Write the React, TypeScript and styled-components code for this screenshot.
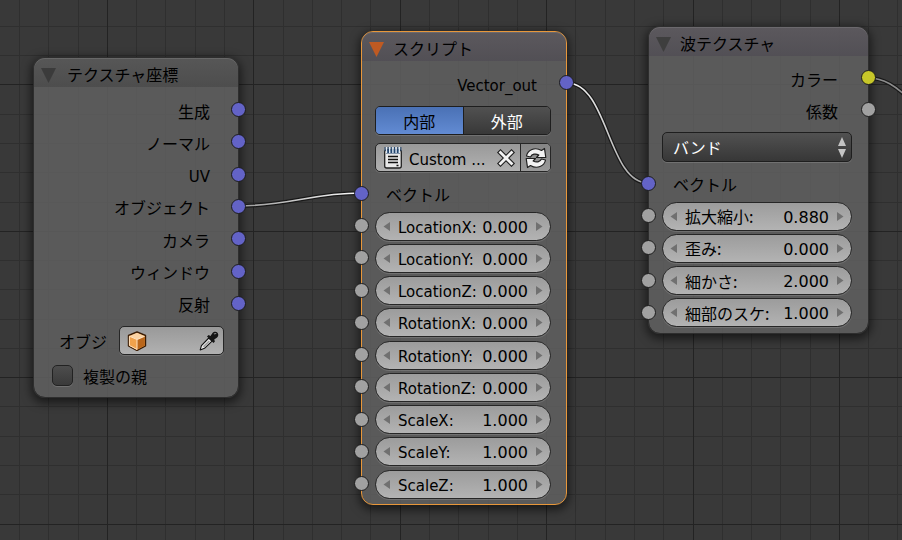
import React from "react";
import styled, { createGlobalStyle, css } from "styled-components";

const GlobalStyle = createGlobalStyle`
  *, *::before, *::after { box-sizing: border-box; }
  html, body, #root { height: 100%; margin: 0; }
  body { background: #393939; overflow: hidden; }
  button, input, select { font: inherit; color: inherit; margin: 0; padding: 0; border: 0; background: none; }
`;

const Canvas = styled.main`
  position: relative;
  width: 100%;
  height: 100%;
  min-height: 100vh;
  overflow: hidden;
  background: #393939;
  color: #000;
  font-family: "DejaVu Sans", "Noto Sans CJK JP", sans-serif;
  font-size: 15px;
  line-height: 20px;
`;

const Layer = styled.svg`
  position: absolute;
  inset: 0;
  width: 100%;
  height: 100%;
  pointer-events: none;
`;

const jp = css`
  font-family: "Noto Sans CJK JP", sans-serif;
  font-size: 16px;
`;

const NodeBox = styled.section<{ $x: number; $y: number; $w: number; $active?: boolean }>`
  position: absolute;
  left: ${(p) => p.$x}px;
  top: ${(p) => p.$y}px;
  width: ${(p) => p.$w}px;
  border: 1px solid ${(p) => (p.$active ? "#e8973a" : "#2e2e2e")};
  border-radius: 12px;
  background: rgba(96, 96, 96, 0.86);
  background-clip: padding-box;
  box-shadow: 0 3px 10px 2px rgba(0, 0, 0, 0.55);
`;

const Header = styled.header<{ $tint: string; $gap: number }>`
  ${jp}
  display: flex;
  align-items: center;
  gap: ${(p) => p.$gap}px;
  height: 29px;
  padding: 5px 8px 0 7px;
  border-radius: 11px 11px 0 0;
  background: ${(p) => p.$tint};
  box-shadow: inset 0 1px 0 rgba(255, 255, 255, 0.1);
`;

const Title = styled.h2`
  margin: 0;
  padding-bottom: 3px;
  font: inherit;
`;

const Fold = styled.button`
  display: flex;
  width: 15px;
  height: 15px;
`;

const Body = styled.div<{ $top: number; $bottom: number; $side: number }>`
  display: flex;
  flex-direction: column;
  padding: ${(p) => p.$top}px ${(p) => p.$side}px ${(p) => p.$bottom}px 13px;
`;

const SocketList = styled.div<{ $h: number }>`
  display: flex;
  flex-direction: column;
  justify-content: space-between;
  height: ${(p) => p.$h}px;
`;

const Row = styled.div<{ $out?: boolean }>`
  ${jp}
  position: relative;
  display: flex;
  align-items: center;
  justify-content: ${(p) => (p.$out ? "flex-end" : "flex-start")};
  height: 32px;
  padding: ${(p) => (p.$out ? "1px 14px 0 0" : "0 0 0 11px")};
`;

const LatinText = styled.span`
  margin-top: 4px;
  font-family: "DejaVu Sans", sans-serif;
  font-size: 15px;
`;

const Dot = styled.i<{ $color: string; $side: "left" | "right"; $reach: number }>`
  position: absolute;
  z-index: 1;
  top: 50%;
  ${(p) => p.$side}: -${(p) => p.$reach}px;
  width: 15px;
  height: 15px;
  margin-top: -8px;
  border: 1px solid #1c1c1c;
  border-radius: 50%;
  background: ${(p) => p.$color};
`;

const FieldRow = styled.div`
  position: relative;
  display: flex;
  align-items: center;
  height: 32px;
`;

const NumberField = styled.label`
  display: flex;
  align-items: center;
  flex: 1;
  min-width: 0;
  height: 29px;
  padding: 0 7px;
  border: 1px solid #262626;
  border-radius: 15px;
  background: linear-gradient(#9c9c9c, #b3b3b3);
  box-shadow: 0 1px 0 rgba(255, 255, 255, 0.14);
  white-space: nowrap;
`;

const FieldName = styled.span<{ $jp?: boolean }>`
  margin-left: 8px;
  padding-top: ${(p) => (p.$jp ? 0 : 3)}px;
  ${(p) => p.$jp && jp}
`;

const FieldValue = styled.input`
  flex: 1;
  width: 0;
  min-width: 0;
  margin-right: 8px;
  padding-top: 3px;
  font-size: 16px;
  text-align: right;
  outline: none;
`;

const Segments = styled.div`
  display: flex;
  height: 29px;
  border: 1px solid #1e1e1e;
  border-radius: 5px;
  overflow: hidden;
  box-shadow: 0 1px 0 rgba(255, 255, 255, 0.14);
`;

const Segment = styled.button<{ $on?: boolean }>`
  ${jp}
  flex: 1;
  color: ${(p) => (p.$on ? "#000" : "#fff")};
  background: ${(p) => (p.$on ? "linear-gradient(#4a71b5, #628bd3)" : "linear-gradient(#515151, #383838)")};
  & + & { border-left: 1px solid #1e1e1e; }
`;

const Picker = styled.div`
  display: flex;
  align-items: stretch;
  height: 29px;
  border: 1px solid #262626;
  border-radius: 5px;
  overflow: hidden;
  background: linear-gradient(#999, #b1b1b1);
  box-shadow: 0 1px 0 rgba(255, 255, 255, 0.14);
`;

const IconButton = styled.button<{ $w: number; $divided?: boolean }>`
  display: flex;
  align-items: center;
  justify-content: center;
  width: ${(p) => p.$w}px;
  ${(p) => p.$divided && "border-left: 1px solid #262626; background: linear-gradient(#858585, #999);"}
`;

const PickerText = styled.input`
  flex: 1;
  min-width: 0;
  width: 0;
  padding-top: 4px;
  outline: none;
`;

const SelectBox = styled.div`
  position: relative;
  display: flex;
  height: 30px;
`;

const Select = styled.select`
  ${jp}
  flex: 1;
  appearance: none;
  padding: 0 24px 0 10px;
  border: 1px solid #1e1e1e;
  border-radius: 5px;
  color: #fff;
  background: linear-gradient(#515151, #373737);
  box-shadow: 0 1px 0 rgba(255, 255, 255, 0.14);
`;

const SelectArrows = styled.svg`
  position: absolute;
  right: 5px;
  top: 5px;
  pointer-events: none;
`;

const ObjectRow = styled.div`
  display: flex;
  align-items: center;
  gap: 12px;
  padding-left: 12px;
  margin-top: 6px;
`;

const ObjectLabel = styled.label`
  ${jp}
`;

const ObjectPicker = styled(Picker)`
  flex: 1;
`;

const CheckRow = styled.label`
  ${jp}
  display: flex;
  align-items: center;
  gap: 10px;
  margin-top: 10px;
  padding-left: 5px;
`;

const CheckText = styled.span`
  height: 21px;
  padding-top: 1px;
`;

const Check = styled.input`
  appearance: none;
  width: 21px;
  height: 21px;
  border: 1px solid #222;
  border-radius: 5px;
  background: linear-gradient(#4d4d4d, #3a3a3a);
  box-shadow: 0 1px 0 rgba(255, 255, 255, 0.14);
`;

const Stack = styled.div<{ $mt: number }>`
  margin-top: ${(p) => p.$mt}px;
`;

const BLUE = "#6363c7";
const GREY = "#a1a1a1";
const YELLOW = "#c7c729";

const TINT_INPUT = "linear-gradient(rgba(86, 86, 86, 0.8), rgba(74, 74, 74, 0.8))";
const TINT_TEXTURE = "linear-gradient(rgba(92, 88, 94, 0.8), rgba(80, 77, 84, 0.8))";

const gridLines = (origin: number, span: number) =>
  Array.from({ length: Math.ceil(span / 29) + 10 }, (_, i) => ({
    at: Math.floor(origin + ((i - 5) * 146.4) / 5),
    major: i % 5 === 0,
  })).filter((l) => l.at >= 0);

const Grid = () => (
  <Layer aria-hidden="true" shapeRendering="crispEdges">
    {[false, true].map((major) => (
      <g key={String(major)} fill={major ? "#232323" : "#2f2f2f"}>
        {gridLines(107.4, 2600).filter((l) => l.major === major).map((l) => (
          <rect key={`x${l.at}`} x={l.at} y="0" width="1" height="100%" />
        ))}
        {gridLines(84.9, 1600).filter((l) => l.major === major).map((l) => (
          <rect key={`y${l.at}`} x="0" y={l.at} width="100%" height="1" />
        ))}
      </g>
    ))}
  </Layer>
);

const wires = [
  { d: "M238 206 C288 206 312 193 361 193", tone: "url(#wireA)" },
  { d: "M567 83 C608 83 608 183 648 183", tone: "url(#wireB)" },
  { d: "M868 78 C884 78 896 86 910 100", tone: "#8c8c8c" },
];

const Wires = () => (
  <Layer aria-hidden="true" fill="none">
    <defs>
      <linearGradient id="wireA"><stop offset="0" stopColor="#999" /><stop offset="1" stopColor="#fff" /></linearGradient>
      <linearGradient id="wireB"><stop offset="0" stopColor="#fff" /><stop offset="1" stopColor="#999" /></linearGradient>
    </defs>
    {wires.map((w) => (
      <g key={w.d}>
        <path d={w.d} stroke="#181818" strokeWidth="4" />
        <path d={w.d} stroke={w.tone} strokeWidth="1.6" />
      </g>
    ))}
  </Layer>
);

const FoldMark = ({ color }: { color: string }) => (
  <Fold aria-label="折りたたむ">
    <svg width="15" height="15" viewBox="0 0 15 15"><path d="M0 0H15L7.500 15Z" fill={color} /></svg>
  </Fold>
);

const Arrow = ({ flip }: { flip?: boolean }) => (
  <svg width="7" height="11" viewBox="0 0 7 11" aria-hidden="true">
    <path d={flip ? "M0 1L6.500 5.500L0 10Z" : "M7 1L0.500 5.500L7 10Z"} fill="#707070" />
  </svg>
);

const NumberRow = ({ name, value, isJp }: { name: string; value: string; isJp?: boolean }) => (
  <FieldRow>
    <Dot $color={GREY} $side="left" $reach={21} />
    <NumberField>
      <Arrow />
      <FieldName $jp={isJp}>{name}:</FieldName>
      <FieldValue defaultValue={value} />
      <Arrow flip />
    </NumberField>
  </FieldRow>
);

const CubeIcon = () => (
  <svg width="20" height="20" viewBox="0 0 20 20">
    <path d="M10 1L18.500 4.500V15L10 19.500L1.500 15V4.500Z" fill="#e8953b" stroke="#3a1c04" strokeWidth="1.400" strokeLinejoin="round" />
    <path d="M10 1.800L17.500 5L10 8.500L2.500 5Z" fill="#fbd3a4" />
    <path d="M10 8.500L17.700 5.200V14.600L10 18.600Z" fill="#b9661b" />
    <path d="M2.400 5.200L10 8.500V18.500L2.400 14.500Z" fill="#f0a24c" stroke="#ffe3c2" strokeWidth="1" />
    <path d="M10 8.500L17.500 5.200" stroke="#ffe3c2" strokeWidth="1.200" />
  </svg>
);

const DropperIcon = () => (
  <svg width="20" height="20" viewBox="0 0 20 20">
    <path d="M1.200 18.900L2.400 14.600L9.800 7L13 10.200L5.500 17.300Z" fill="#eee" stroke="#111" strokeWidth="1.100" strokeLinejoin="round" />
    <path d="M4.500 15.700L10.300 10" stroke="#999" strokeWidth="1.400" />
    <path d="M8 5.400L9.600 4.100L11.500 5L13.300 2.200C15 .2 17.500 .4 18.700 1.900C19.700 3.400 19.400 5.300 17.800 6.700L15.200 8.600L15.900 10.600L14.500 12Z" fill="#161616" />
    <path d="M15 3.200C15.700 2.500 16.600 2.400 17.200 2.800" stroke="#888" strokeWidth="1.100" fill="none" />
  </svg>
);

const TextIcon = () => (
  <svg width="20" height="23" viewBox="0 0 20 23">
    <rect x="1.700" y="4" width="16.600" height="18" rx="2" fill="#e9e9e9" stroke="#222" strokeWidth="1.300" />
    <path d="M3 3.500H17V7.500H3Z" fill="#24466f" />
    <path d="M3.500 1V7M6.700 1V7M9.900 1V7M13.100 1V7M16.300 1V7" stroke="#dfeaf5" strokeWidth="1.400" />
    <path d="M2 1V5M5.100 1V5M8.300 1V5M11.500 1V5M14.700 1V5M17.900 1V5" stroke="#24466f" strokeWidth="1" />
    <path d="M5 10.500H15M5 13.500H15M5 16.500H15" stroke="#111" strokeWidth="1.500" />
    <path d="M13.500 19.500H15.500" stroke="#111" strokeWidth="1.500" />
  </svg>
);

const CloseIcon = () => (
  <svg width="18" height="18" viewBox="0 0 18 18" strokeLinecap="square">
    <path d="M3.500 3.500L14.500 14.500M14.500 3.500L3.500 14.500" stroke="#1c1c1c" strokeWidth="5" />
    <path d="M3.500 3.500L14.500 14.500M14.500 3.500L3.500 14.500" stroke="#f2f2f2" strokeWidth="2.800" />
  </svg>
);

const RefreshIcon = () => (
  <svg width="24" height="22" viewBox="0 0 24 22" strokeLinejoin="round">
    <g fill="#f2f2f2" stroke="#1f1f1f" strokeWidth="1.200">
      <path d="M2.500 9C3.500 3 11 -0.500 17.500 3.500L20.500 1.500L21.800 10.500H12.500L14.800 8C11.500 6.200 8 7 6.500 10Z" />
      <path d="M21.500 13C20.500 19 13 22.500 6.500 18.500L3.500 20.500L2.200 11.500H11.500L9.200 14C12.500 15.800 16 15 17.500 12Z" />
    </g>
  </svg>
);

const coordinateOutputs = ["生成", "ノーマル", "UV", "オブジェクト", "カメラ", "ウィンドウ", "反射"];
const scriptInputs = [
  ["LocationX", "0.000"], ["LocationY", "0.000"], ["LocationZ", "0.000"],
  ["RotationX", "0.000"], ["RotationY", "0.000"], ["RotationZ", "0.000"],
  ["ScaleX", "1.000"], ["ScaleY", "1.000"], ["ScaleZ", "1.000"],
];
const waveInputs = [["拡大縮小", "0.880"], ["歪み", "0.000"], ["細かさ", "2.000"], ["細部のスケ", "1.000"]];

export default function App() {
  return (
    <>
      <GlobalStyle />
      <Canvas>
        <Grid />
        <NodeBox $x={33} $y={57} $w={206}>
          <Header $tint={TINT_INPUT} $gap={11}>
            <FoldMark color="#3b3b3b" />
            <Title>テクスチャ座標</Title>
          </Header>
          <Body $top={7} $bottom={11} $side={14}>
            <SocketList $h={226}>
              {coordinateOutputs.map((name) => (
                <Row key={name} $out>
                  {name === "UV" ? <LatinText>UV</LatinText> : name}
                  <Dot $color={BLUE} $side="right" $reach={22} />
                </Row>
              ))}
            </SocketList>
            <ObjectRow>
              <ObjectLabel htmlFor="object">オブジ</ObjectLabel>
              <ObjectPicker>
                <IconButton $w={34} aria-label="オブジェクト"><CubeIcon /></IconButton>
                <PickerText id="object" />
                <IconButton $w={28} aria-label="スポイト"><DropperIcon /></IconButton>
              </ObjectPicker>
            </ObjectRow>
            <CheckRow>
              <Check type="checkbox" />
              <CheckText>複製の親</CheckText>
            </CheckRow>
          </Body>
        </NodeBox>

        <NodeBox $x={361} $y={31} $w={206} $active>
          <Header $tint={TINT_TEXTURE} $gap={9}>
            <FoldMark color="#bf5a22" />
            <Title>スクリプト</Title>
          </Header>
          <Body $top={6} $bottom={4} $side={15}>
            <Row $out>
              <LatinText>Vector_out</LatinText>
              <Dot $color={BLUE} $side="right" $reach={23} />
            </Row>
            <Stack $mt={7}>
              <Segments>
                <Segment $on>内部</Segment>
                <Segment>外部</Segment>
              </Segments>
            </Stack>
            <Stack $mt={8}>
              <Picker>
                <IconButton $w={33} aria-label="テキスト"><TextIcon /></IconButton>
                <PickerText defaultValue="Custom ..." aria-label="テキスト名" />
                <IconButton $w={28} aria-label="解除"><CloseIcon /></IconButton>
                <IconButton $w={30} $divided aria-label="更新"><RefreshIcon /></IconButton>
              </Picker>
            </Stack>
            <Stack $mt={6}>
              <Row>
                <Dot $color={BLUE} $side="left" $reach={21} />
                ベクトル
              </Row>
            </Stack>
            <SocketList $h={290}>
              {scriptInputs.map(([name, value]) => (
                <NumberRow key={name} name={name} value={value} />
              ))}
            </SocketList>
          </Body>
        </NodeBox>

        <NodeBox $x={648} $y={26} $w={221}>
          <Header $tint={TINT_TEXTURE} $gap={9}>
            <FoldMark color="#3e3e3e" />
            <Title>波テクスチャ</Title>
          </Header>
          <Body $top={6} $bottom={4} $side={16}>
            <Row $out>
              カラー
              <Dot $color={YELLOW} $side="right" $reach={24} />
            </Row>
            <Row $out>
              係数
              <Dot $color={GREY} $side="right" $reach={24} />
            </Row>
            <Stack $mt={6}>
              <SelectBox>
                <Select defaultValue="band" aria-label="波のタイプ"><option value="band">バンド</option></Select>
                <SelectArrows width="10" height="21" viewBox="0 0 10 21">
                  <path d="M5 0L9 9H1ZM5 21L1 12H9Z" fill="#c4c4c4" />
                </SelectArrows>
              </SelectBox>
            </Stack>
            <Stack $mt={6}>
              <Row>
                <Dot $color={BLUE} $side="left" $reach={21} />
                ベクトル
              </Row>
            </Stack>
            <SocketList $h={129}>
              {waveInputs.map(([name, value]) => (
                <NumberRow key={name} name={name} value={value} isJp />
              ))}
            </SocketList>
          </Body>
        </NodeBox>
        <Wires />
      </Canvas>
    </>
  );
}
